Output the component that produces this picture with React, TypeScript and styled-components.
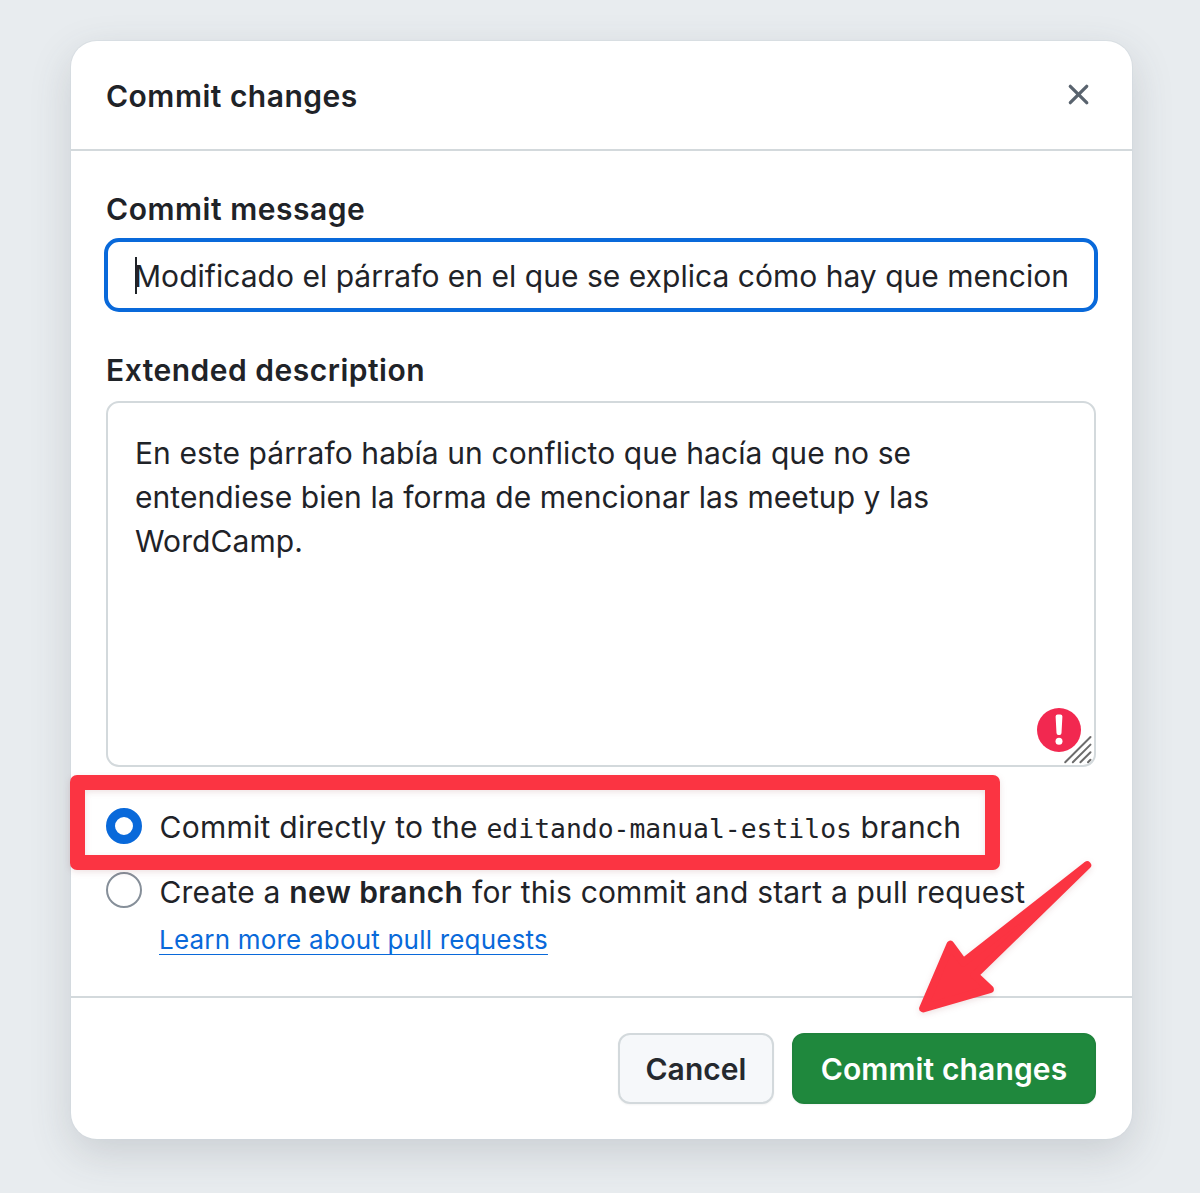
import React from "react";
import styled, { createGlobalStyle } from "styled-components";

const GlobalStyle = createGlobalStyle`
  *, *::before, *::after { box-sizing: border-box; }
  body {
    margin: 0;
    background: #e8ecef;
    color: #1f2328;
    font-family: Inter, "Liberation Sans", sans-serif;
    font-size: 30px;
    line-height: 44px;
  }
`;

const Backdrop = styled.div`
  display: flex;
  align-items: flex-start;
  justify-content: center;
  width: 1200px;
  height: 1193px;
  padding: 41px 68px 0 71px;
  overflow: hidden;
`;

const Dialog = styled.div`
  position: relative;
  display: flex;
  flex-direction: column;
  width: 1061px;
  height: 1098px;
  border-radius: 26px;
  background: #fff;
  box-shadow: 0 0 0 1px rgba(208, 215, 222, 0.5), 0 14px 42px rgba(66, 74, 83, 0.18);
`;

const Header = styled.header`
  display: flex;
  align-items: center;
  justify-content: space-between;
  height: 110px;
  padding: 0 36px 0 35px;
  border-bottom: 2px solid #d3d9dc;
`;

const Title = styled.h1`
  margin: 0;
  padding-top: 2px;
  font-size: 30px;
  font-weight: 600;
  letter-spacing: 0.5px;
`;

const CloseButton = styled.button`
  display: flex;
  margin: 0 0 1px;
  padding: 0;
  border: 0;
  background: none;
  color: #59636e;
`;

const Body = styled.div`
  display: flex;
  flex-direction: column;
  flex: 1;
  padding: 36px 36px 0 35px;
`;

const Label = styled.label<{ $tracking: number }>`
  font-weight: 600;
  letter-spacing: ${(p) => p.$tracking}px;
`;

const MessageInput = styled.div`
  display: flex;
  align-items: center;
  height: 74px;
  margin: 7px -2px 36px -2px;
  padding: 2px 22px 0 26px;
  border: 4px solid #0969da;
  border-radius: 15px;
  letter-spacing: 0.02px;
  white-space: nowrap;
`;

const Caret = styled.span`
  width: 2px;
  height: 37px;
  margin: 0 -3px 2px 1px;
  background: #1f2328;
`;

const Description = styled.div`
  position: relative;
  height: 366px;
  margin-top: 9px;
  padding: 28px 27px;
  border: 2px solid #d3d9dc;
  border-radius: 13px;
  letter-spacing: 0.08px;
`;

const AlertBadge = styled.svg`
  position: absolute;
  right: 13.5px;
  bottom: 13px;
`;

const ResizeGrip = styled.svg`
  position: absolute;
  right: 1px;
  bottom: 0;
`;

const Options = styled.div`
  display: flex;
  flex-direction: column;
  gap: 20px;
  margin-top: 38px;
`;

const Option = styled.div`
  display: flex;
  align-items: center;
  gap: 17.5px;
  height: 44px;
  white-space: pre;
`;

const OptionText = styled.span<{ $tracking: number }>`
  padding-top: 2px;
  letter-spacing: ${(p) => p.$tracking}px;
`;

const Radio = styled.span<{ $checked?: boolean }>`
  width: 36px;
  height: 36px;
  margin-bottom: 3px;
  border: ${(p) => (p.$checked ? "9px solid #0969da" : "2px solid #868f99")};
  border-radius: 50%;
  background: #fff;
`;

const Strong = styled.strong`
  font-weight: 600;
  letter-spacing: 0.4px;
`;

const BranchName = styled.code`
  font-family: "DejaVu Sans Mono", monospace;
  font-size: 26.4px;
  letter-spacing: 0;
`;

const HelpLink = styled.a`
  align-self: flex-start;
  margin: 8px 0 0 53px;
  color: #0969da;
  font-size: 26px;
  line-height: 38px;
  letter-spacing: 0.2px;
  text-decoration: underline;
  text-decoration-thickness: 1.4px;
  text-underline-offset: 5px;
`;

const Footer = styled.footer`
  display: flex;
  justify-content: flex-end;
  gap: 18px;
  height: 143px;
  padding: 35px 36px 0;
  border-top: 2px solid #d3d9dc;
`;

const Button = styled.button<{ $primary?: boolean }>`
  width: ${(p) => (p.$primary ? 304 : 156)}px;
  height: 71px;
  padding: 1px 0 0;
  border: 2px solid ${(p) => (p.$primary ? "#1f833c" : "#d3d9dc")};
  border-radius: 12px;
  background: ${(p) => (p.$primary ? "#1f883d" : "#f6f8fa")};
  box-shadow: 0 1px 2px rgba(31, 35, 40, 0.05);
  color: ${(p) => (p.$primary ? "#fff" : "#25292e")};
  font-family: inherit;
  font-size: 30px;
  font-weight: 600;
  letter-spacing: ${(p) => (p.$primary ? 0.13 : 0.05)}px;
`;

const Highlight = styled.div`
  position: absolute;
  left: -1px;
  top: 734px;
  width: 930px;
  height: 95px;
  border: 15px solid #fb3442;
  border-radius: 7px;
  filter: drop-shadow(0 2px 3px rgba(120, 20, 30, 0.13));
`;

const Arrow = styled.svg`
  position: absolute;
  left: 808px;
  top: 809px;
  filter: drop-shadow(0 2px 3px rgba(120, 20, 30, 0.13));
`;

export default function App() {
  return (
    <>
      <GlobalStyle />
      <Backdrop>
        <Dialog role="dialog">
          <Header>
            <Title>Commit changes</Title>
            <CloseButton aria-label="Close">
              <svg width="35" height="35" viewBox="0 0 16 16" fill="currentColor">
                <path d="M3.72 3.72a.75.75 0 0 1 1.06 0L8 6.94l3.22-3.22a.749.749 0 0 1 1.275.326.749.749 0 0 1-.215.734L9.06 8l3.22 3.22a.749.749 0 0 1-.326 1.275.749.749 0 0 1-.734-.215L8 9.06l-3.22 3.22a.751.751 0 0 1-1.042-.018.751.751 0 0 1-.018-1.042L6.94 8 3.72 4.78a.75.75 0 0 1 0-1.06Z" />
              </svg>
            </CloseButton>
          </Header>
          <Body>
            <Label $tracking={0.54}>Commit message</Label>
            <MessageInput>
              <Caret />
              Modificado el párrafo en el que se explica cómo hay que mencion
            </MessageInput>
            <Label $tracking={0.5}>Extended description</Label>
            <Description>
              En este párrafo había un conflicto que hacía que no se
              <br />
              entendiese bien la forma de mencionar las meetup y las
              <br />
              WordCamp.
              <AlertBadge width="44" height="44" viewBox="0 0 44 44">
                <circle cx="22" cy="22" r="22" fill="#f22850" />
                <path
                  d="M18.6 8.6Q18.6 6.6 20.6 6.6H23.4Q25.4 6.6 25.4 8.6L24.5 25Q24.4 27 22.6 27H21.4Q19.6 27 19.5 25Z"
                  fill="#fff"
                />
                <circle cx="22" cy="33.2" r="3.5" fill="#fff" />
              </AlertBadge>
              <ResizeGrip width="30" height="30" viewBox="0 0 30 30">
                <path
                  d="M2.2 27.3L27.5 2M9.8 27.3L27.5 9.6M17.4 27.3L27.5 17.2M25 27.3L27.5 24.8"
                  stroke="#6c6c6c"
                  strokeWidth="2"
                  strokeLinecap="round"
                />
              </ResizeGrip>
            </Description>
            <Options>
              <Option>
                <Radio $checked />
                <OptionText $tracking={0.26}>
                  Commit directly to the <BranchName>editando-manual-estilos</BranchName> branch
                </OptionText>
              </Option>
              <Option>
                <Radio />
                <OptionText $tracking={0.18}>
                  Create a <Strong>new branch</Strong> for this commit and start a pull request
                </OptionText>
              </Option>
            </Options>
            <HelpLink>Learn more about pull requests</HelpLink>
          </Body>
          <Footer>
            <Button>Cancel</Button>
            <Button $primary>Commit changes</Button>
          </Footer>
          <Highlight />
          <Arrow width="190" height="170" viewBox="879 850 190 170" overflow="visible">
            <path
              d="M1087.2 865.2L963.2 962.4L950.4 944.8L923.2 1008.4L989.8 989.2L974.6 975Z"
              fill="#fb3442"
              stroke="#fb3442"
              strokeWidth="8"
              strokeLinejoin="round"
            />
          </Arrow>
        </Dialog>
      </Backdrop>
    </>
  );
}
